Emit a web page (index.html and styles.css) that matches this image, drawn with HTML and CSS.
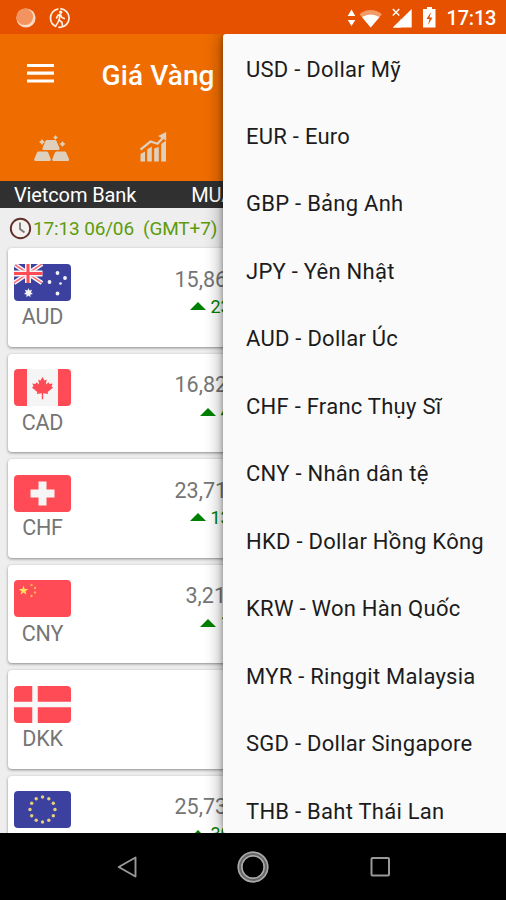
FILE: index.html
```html
<!DOCTYPE html>
<html lang="vi">
<head>
<meta charset="utf-8">
<title>Giá Vàng</title>
<link rel="stylesheet" href="styles.css">
</head>
<body>
<div class="screen">
  <header class="status">
    <svg class="status-left" width="60" height="24" viewBox="0 0 60 24">
      <circle cx="12" cy="12" r="9.6" fill="#fbd9c4"/><circle cx="10.8" cy="10.8" r="8.3" fill="#f3935f"/>
      <circle cx="45.8" cy="12" r="9.3" fill="none" stroke="#fff0e5" stroke-width="1.7" stroke-dasharray="16 2 24 2"/>
      <circle cx="46.7" cy="6.2" r="1.7" fill="#fff0e5"/>
      <path d="M42.5 12l1.5-2.7 2.5-.6 1.4 2.8 2.4 1M46 9l-.8 5 2.7 2.3.6 3.2M45 13.5l-1 3-1.8 2.6" fill="none" stroke="#fff0e5" stroke-width="1.6" stroke-linecap="round"/>
    </svg>
    <svg class="status-right" width="92" height="24" viewBox="0 0 92 24">
      <path d="M4.5 3.5L8.3 10H.7zM4.5 20L.7 14h7.600z" fill="#fff"/>
      <path d="M12.500 8.200Q23.500 0 35 8.200L23.700 21.500z" fill="#f39b67"/>
      <path d="M15 11Q23.500 5.800 32.500 11L23.700 21.500z" fill="#fff"/>
      <path d="M64.700 3v18.500H45.800z" fill="#fff"/>
      <path d="M45 1h9v11h-9z" fill="#e65100"/><path d="M53.500 12l.5 1.700-8 7.800h8z" fill="#fff"/>
      <path d="M45.800 3l6.500 6.500M52.300 3l-6.500 6.500" stroke="#fff" stroke-width="1.500"/>
      <path d="M80 1h5v2h3.500v18.500H76V3h4z" fill="#fff"/>
      <path d="M84 6l-4.500 7h3l-1.500 6 4.500-7.500h-3z" fill="#e65100"/>
    </svg>
    <span class="clock">17:13</span>
  </header>

  <main class="app">
    <div class="toolbar">
      <svg width="27" height="22" viewBox="0 0 27 22"><path d="M0 2.500h27M0 10.200h27M0 18h27" stroke="#fff" stroke-width="3.200"/></svg>
      <h1>Giá Vàng</h1>
    </div>
    <nav class="tabs">
      <svg class="gold" width="36" height="28" viewBox="0 0 36 28" fill="#ded0bd">
        <path d="M13 5h8q1 0 1.500 1l3 7q.5 2-1.500 2H10q-2 0-1.500-2l3-7q.5-1 1.500-1zM4.500 16.500h8q1.200 0 1.700 1l2.500 6.500q.5 2-1.500 2H1.800q-2 0-1.500-2l2.700-6.500q.5-1 1.500-1zM22.500 16.500h8q1.200 0 1.700 1l2.800 6.500q.5 2-1.500 2H19.800q-2 0-1.500-2l2.700-6.500q.5-1 1.500-1z"/>
        <path d="M8 4l1.200 1.800 1.800 1.200-1.800 1.200L8 10l-1.200-1.800L5 7l1.800-1.200zM21.500 0l1 1.500 1.500 1-1.500 1-1 1.500-1-1.500-1.500-1 1.500-1zM28.500 6l1.200 1.800 1.800 1.200-1.800 1.200-1.200 1.800-1.200-1.800-1.800-1.200 1.800-1.200z"/>
      </svg>
      <svg class="chart" width="28" height="30" viewBox="0 0 28 30">
        <path d="M.5 22l4.500-2.500V29.500H.500zM7.200 17.500l4.600-3V29.500H7.200zM14.200 16.500l4.600-1.500V29.500h-4.600zM21.200 12l4.800-3.500V29.500h-4.800z" fill="#ded0bd"/>
        <path d="M.5 17.500l10-8 7 2.300 6-6.500" fill="none" stroke="#ded0bd" stroke-width="2.300"/>
        <path d="M18 4L26.200 0v8.500z" fill="#ded0bd"/>
      </svg>
    </nav>
    <div class="bank"><span>Vietcom Bank</span><span class="buy-head">MUA</span></div>
    <div class="updated">
      <svg width="23" height="23" viewBox="0 0 23 23"><circle cx="11.500" cy="11.500" r="9.700" fill="#f5f1ef" stroke="#603129" stroke-width="1.900"/><path d="M11 5.500v6.500l4.500 3.500" fill="none" stroke="#777" stroke-width="1.800"/></svg>
      <span>17:13 06/06 &nbsp;(GMT+7)</span>
    </div>

    <section class="cards">
      <article class="card">
        <div class="currency">
          <svg class="flag" viewBox="0 0 57 37">
            <path fill="#3c41a0" d="M0 0h57v37H0z"/>
            <path d="M0 0l28 19M28 0L0 19" stroke="#f5f5f5" stroke-width="4.500"/><path d="M0 0l28 19M28 0L0 19" stroke="#ff6470" stroke-width="1.500"/>
            <path d="M14 0v19M0 9.500h28.500" stroke="#f5f5f5" stroke-width="6"/><path d="M14 0v19M0 9.500h28.500" stroke="#ff4b55" stroke-width="3"/>
            <path fill="#f5f5f5" d="M14.500 24l1 2.400 2.600-.6-1.200 2.400 2 1.700-2.500.6v2.700l-1.900-1.700-2 1.700v-2.700l-2.500-.6 2-1.700-1.200-2.400 2.600.6z"/>
            <g fill="#f5f5f5"><circle cx="43.500" cy="9" r="1.900"/><circle cx="35.500" cy="18" r="1.900"/><circle cx="51" cy="14" r="1.900"/><circle cx="46.500" cy="19.500" r="1.300"/><circle cx="43.500" cy="29.500" r="1.900"/></g>
          </svg>
          <span>AUD</span>
        </div>
        <div class="rate"><span>15,86</span><span class="change">23</span></div>
      </article>
      <article class="card">
        <div class="currency">
          <svg class="flag" viewBox="0 0 57 37">
            <path fill="#f5f5f5" d="M0 0h57v37H0z"/><path fill="#ff4b55" d="M0 0h13v37H0zM44 0h13v37H44z"/>
            <path fill="#ff4b55" d="M28.500 8l2 3.500 2.200-1-.8 5 2.800-2.200.8 1.700 3.200-.5-1.200 3 1.700 1-5.500 4.500.5 2-5-.8v6h-1.400v-6l-5 .8.500-2-5.500-4.500 1.700-1-1.200-3 3.200.5.800-1.700 2.800 2.200-.8-5 2.200 1z"/>
          </svg>
          <span>CAD</span>
        </div>
        <div class="rate"><span>16,82</span><span class="change short">4</span></div>
      </article>
      <article class="card">
        <div class="currency">
          <svg class="flag" viewBox="0 0 57 37"><path fill="#ff4b55" d="M0 0h57v37H0z"/><path d="M28.500 6.500v24M16.500 18.500h24" stroke="#f5f5f5" stroke-width="8"/></svg>
          <span>CHF</span>
        </div>
        <div class="rate"><span>23,71</span><span class="change">13</span></div>
      </article>
      <article class="card">
        <div class="currency">
          <svg class="flag" viewBox="0 0 57 37"><path fill="#ff4b55" d="M0 0h57v37H0z"/>
            <path fill="#ffe15a" d="M9.500 5.500l1.200 3.500h3.600l-2.900 2.200 1.100 3.500-3-2.100-3 2.100 1.100-3.500L4.700 9h3.600z"/>
            <g fill="#ffb34f"><circle cx="17.500" cy="5" r="1.200"/><circle cx="21" cy="8" r="1.200"/><circle cx="21" cy="12.500" r="1.200"/><circle cx="17.500" cy="16" r="1.200"/></g>
          </svg>
          <span>CNY</span>
        </div>
        <div class="rate indent"><span>3,21</span><span class="change short">1</span></div>
      </article>
      <article class="card">
        <div class="currency">
          <svg class="flag" viewBox="0 0 57 37"><path fill="#ff4b55" d="M0 0h57v37H0z"/><path d="M21 0v37M0 18.500h57" stroke="#f8f8f8" stroke-width="5.500"/></svg>
          <span>DKK</span>
        </div>
      </article>
      <article class="card">
        <div class="currency">
          <svg class="flag" viewBox="0 0 57 37"><path fill="#3c41a0" d="M0 0h57v37H0z"/>
            <g fill="#e6d07b"><circle cx="28.500" cy="6" r="1.700"/><circle cx="34.800" cy="7.700" r="1.700"/><circle cx="39.300" cy="12.200" r="1.700"/><circle cx="41" cy="18.500" r="1.700"/><circle cx="39.300" cy="24.800" r="1.700"/><circle cx="34.800" cy="29.300" r="1.700"/><circle cx="28.500" cy="31" r="1.700"/><circle cx="22.200" cy="29.300" r="1.700"/><circle cx="17.700" cy="24.800" r="1.700"/><circle cx="16" cy="18.500" r="1.700"/><circle cx="17.700" cy="12.200" r="1.700"/><circle cx="22.200" cy="7.700" r="1.700"/></g>
          </svg>
        </div>
        <div class="rate"><span>25,73</span><span class="change">30</span></div>
      </article>
    </section>

    <ul class="menu">
      <li>USD - Dollar Mỹ</li>
      <li>EUR - Euro</li>
      <li>GBP - Bảng Anh</li>
      <li>JPY - Yên Nhật</li>
      <li>AUD - Dollar Úc</li>
      <li>CHF - Franc Thụy Sĩ</li>
      <li>CNY - Nhân dân tệ</li>
      <li>HKD - Dollar Hồng Kông</li>
      <li>KRW - Won Hàn Quốc</li>
      <li>MYR - Ringgit Malaysia</li>
      <li>SGD - Dollar Singapore</li>
      <li>THB - Baht Thái Lan</li>
    </ul>
  </main>

  <footer class="navbar">
    <svg width="22" height="24" viewBox="0 0 22 24"><path d="M19.500 2.500v19L2.700 12z" fill="none" stroke="#999" stroke-width="1.900" stroke-linejoin="round"/></svg>
    <svg width="34" height="34" viewBox="0 0 34 34" fill="none"><circle cx="17" cy="17" r="13" stroke="#666" stroke-width="5"/><circle cx="17" cy="17" r="14.700" stroke="#aaa" stroke-width="1.500"/><circle cx="17" cy="17" r="11.200" stroke="#aaa" stroke-width="1.500"/></svg>
    <svg width="22" height="22" viewBox="0 0 22 22"><rect x="2.500" y="2" width="17.500" height="17.500" rx="1" fill="none" stroke="#999" stroke-width="2"/></svg>
  </footer>
</div>
</body>
</html>
```
FILE: styles.css
```css
* { box-sizing: border-box; }
body { margin: 0; font-family: Roboto, "Liberation Sans", sans-serif; }
svg { display: block; flex: none; }
.screen { width: 506px; height: 900px; overflow: hidden; display: flex; flex-direction: column; background: #000; }

.status { height: 34px; flex: none; display: flex; align-items: center; padding: 0 9.500px 0 14px; background: #e65100; color: #fff; }
.status-left { margin-top: 1px; }
.status-right { margin-left: auto; margin-top: 1px; }
.clock { margin-left: 8px; font-size: 20px; font-weight: 500; line-height: 34px; padding-top: 2px; width: 50px; white-space: nowrap; letter-spacing: -.2px; }

.app { position: relative; height: 799px; flex: none; overflow: hidden; background: #eee; }
.toolbar { height: 80px; display: flex; align-items: center; padding-left: 26.500px; background: #ef6c00; color: #fff; }
.toolbar h1 { margin: 3px 0 0 48px; font-size: 28px; font-weight: 500; line-height: 34px; letter-spacing: .1px; }
.tabs { height: 67px; display: flex; align-items: flex-start; background: #ef6c00; }
.gold { margin: 21px 0 0 34px; }
.chart { margin: 18px 0 0 69.500px; }
.bank { height: 27px; display: flex; align-items: center; padding-left: 14px; background: #303030; color: #fff; font-size: 20px; letter-spacing: -.12px; }
.buy-head { margin-left: 55px; }
.updated { height: 40px; display: flex; align-items: center; padding: 1px 0 0 9px; color: #5d9c0c; font-size: 19px; letter-spacing: -.15px; }
.updated span { margin-left: 1px; }

.cards { display: flex; flex-direction: column; gap: 7px; padding: 0 8px 0 7.500px; }
.card { height: 98.500px; flex: none; display: flex; background: #fff; border-radius: 4px; box-shadow: 0 1px 3px rgba(0,0,0,.42); padding: 15.500px 0 0 6.500px; color: #757575; }
.currency { width: 57px; display: flex; flex-direction: column; align-items: center; font-size: 21.500px; line-height: 25px; }
.currency span { margin-top: 3.500px; letter-spacing: -.2px; }
.flag { width: 57px; height: 37px; border-radius: 4px; }
.rate { margin: 3px 0 0 103.500px; font-size: 21.500px; line-height: 25px; letter-spacing: 0; display: flex; flex-direction: column; }
.rate.indent { margin-left: 114.500px; }
.change { margin: 3px 0 0 15px; display: flex; align-items: center; gap: 5px; color: #008000; font-size: 18px; line-height: 23px; }
.change::before { content: ""; border: 8px solid transparent; border-top: 0; border-bottom: 8px solid #008000; }
.change.short { margin-left: 25px; }
.indent .change.short { margin-left: 14px; }

.menu { position: absolute; top: 0; left: 223px; width: 300px; height: 799px; margin: 0; padding: 1.500px 0 0 23px; list-style: none; background: #fafafa; border-radius: 3px; box-shadow: 0 0 18px rgba(0,0,0,.45), 0 2px 5px rgba(0,0,0,.3); color: #1c1c1c; }
.menu li { height: 67.480px; line-height: 67.480px; font-size: 22px; letter-spacing: .26px; white-space: nowrap; }

.navbar { height: 67px; flex: none; display: grid; grid-template-columns: repeat(3, 126.500px); justify-content: center; align-items: center; justify-items: center; background: #000; }
```
